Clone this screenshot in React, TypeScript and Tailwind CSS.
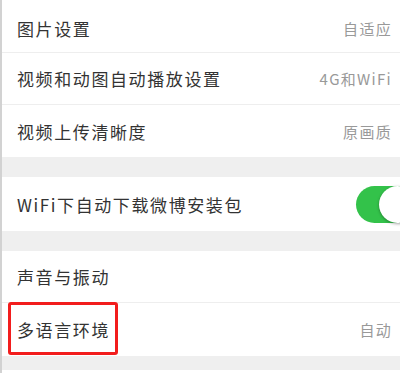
import React from "react";

const font = { fontFamily: '"Noto Sans CJK SC", "Noto Sans", sans-serif' };

function Row({
  label,
  value,
  h,
  children,
  last,
}: {
  label: string;
  value?: string;
  h: string;
  children?: React.ReactNode;
  last?: boolean;
}) {
  return (
    <div className={`relative flex items-center justify-between pl-[15px] pr-[8px] bg-white ${h} ${last ? "" : "border-b border-[#eeeeee]"}`}>
      <span className="text-[17px] tracking-[1.6px] text-[#333333] leading-none">{label}</span>
      {value && <span className="text-[15px] tracking-[1.3px] text-[#999999] leading-none">{value}</span>}
      {children}
    </div>
  );
}

export default function App() {
  return (
    <div className="w-[400px] h-[373px] overflow-hidden flex bg-white" style={font}>
      <div className="w-[2px] bg-[#d2d2d2] shrink-0" />
      <div className="flex-1 flex flex-col overflow-hidden">
        <Row label="图片设置" value="自适应" h="h-[53px] pt-[5px]" />
        <Row label="视频和动图自动播放设置" value="4G和WiFi" h="h-[52px]" />
        <Row label="视频上传清晰度" value="原画质" h="h-[52px]" last />
        <div className="h-[20px] bg-[#efefef]" />
        <div className="relative flex items-center justify-between pl-[15px] bg-white h-[54px]">
          <span className="text-[17px] tracking-[1.6px] text-[#333333] leading-none">WiFi下自动下载微博安装包</span>
          <div className="relative w-[64px] h-[37px] rounded-full bg-[#33c24a] mr-[-20px] shrink-0">
            <div className="absolute left-[23px] top-0 w-[37px] h-[37px] rounded-full bg-white shadow-[0_1px_3px_rgba(0,0,0,0.35)]" />
          </div>
        </div>
        <div className="h-[20px] bg-[#efefef]" />
        <Row label="声音与振动" h="h-[52px]" />
        <div className="relative flex items-center justify-between pl-[15px] pr-[8px] bg-white h-[53px]">
          <span className="text-[17px] tracking-[1.6px] text-[#333333] leading-none">多语言环境</span>
          <span className="text-[15px] tracking-[1.3px] text-[#999999] leading-none">自动</span>
          <div className="absolute left-[6px] top-[-1px] w-[110px] h-[53px] border-[3px] border-[#f21d1d] rounded-[3px]" />
        </div>
        <div className="h-[14px] bg-[#efefef]" />
        <div className="flex-1 bg-white" />
      </div>
    </div>
  );
}
